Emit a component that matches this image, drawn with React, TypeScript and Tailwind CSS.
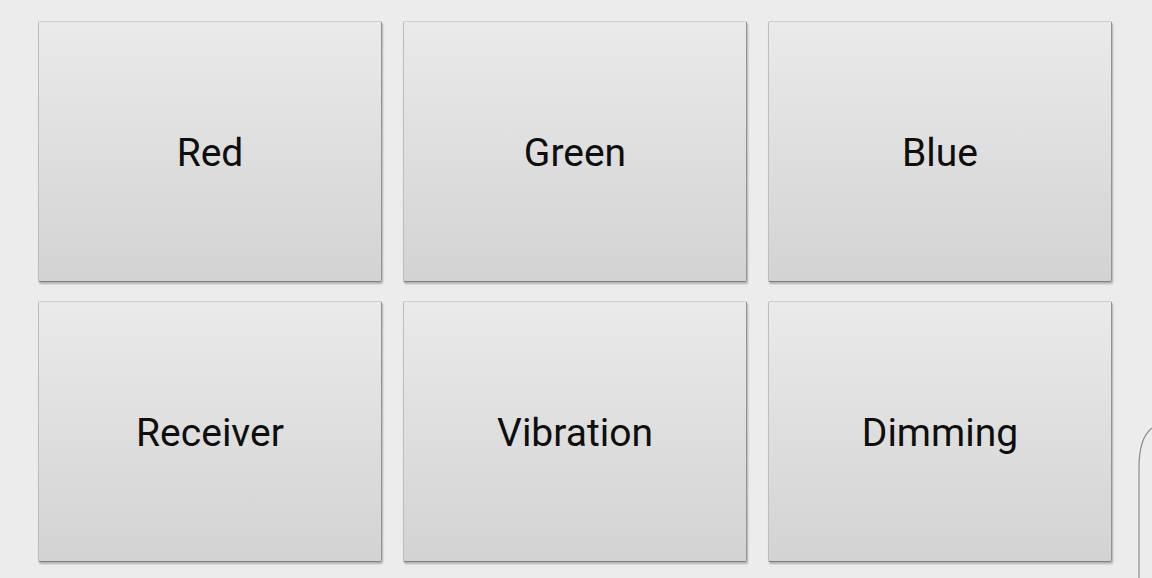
const labels = ["Red", "Green", "Blue", "Receiver", "Vibration", "Dimming"];

export default function App() {
  return (
    <div className="relative h-[578px] w-[1152px] overflow-hidden bg-[#ececec] font-['Roboto',sans-serif]">
      <div className="grid grid-cols-[344px_344px_344px] grid-rows-[261px_261px] gap-x-[21px] gap-y-[19px] pl-[38px] pt-[21px]">
        {labels.map((label) => (
          <button
            key={label}
            className="flex items-center justify-center rounded-[2px] border border-t-[#d0d0d0] border-l-[#bdbdbd] border-r-[#939393] border-b-[#808080] bg-gradient-to-b from-[#eaeaea] to-[#d3d3d3] pt-[4px] text-[39px] leading-none text-[#0e0e0e] shadow-[1px_2px_2px_rgba(0,0,0,0.25)]"
          >
            {label}
          </button>
        ))}
      </div>
      <svg className="absolute left-[1130px] top-[420px]" width="22" height="158" viewBox="0 0 22 158">
        <path d="M22 8 C14 14 9 28 9 48 L9 158" fill="none" stroke="#8a8a8a" strokeWidth="1.2" />
      </svg>
    </div>
  );
}
